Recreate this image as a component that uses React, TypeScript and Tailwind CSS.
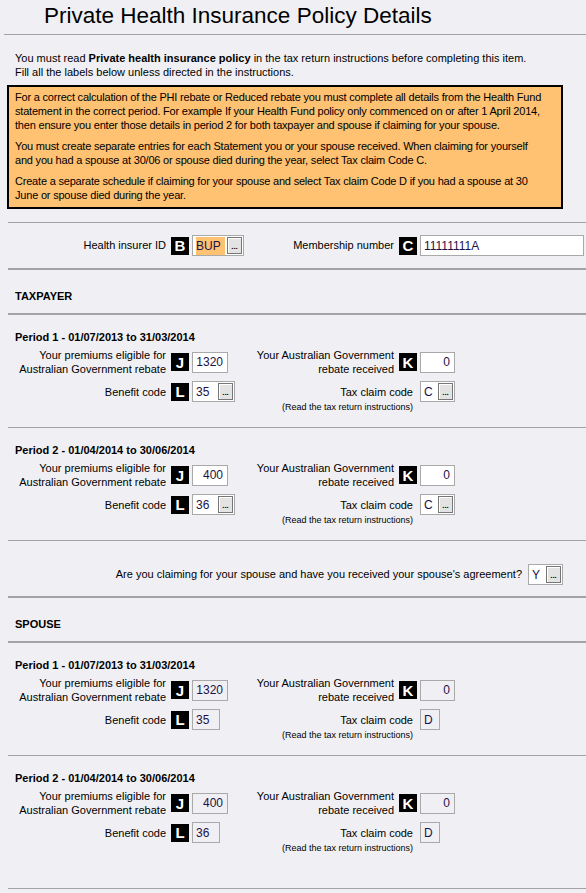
import React from "react";

type FieldProps = {
  value: string;
  w: string;
  right?: boolean;
  btn?: boolean;
  off?: boolean;
  hl?: boolean;
};

function Letter({ ch }: { ch: string }) {
  return (
    <span className="flex h-[18px] w-[18px] shrink-0 items-center justify-center bg-black text-[15px] font-bold leading-none text-white">
      {ch}
    </span>
  );
}

function Field({ value, w, right, btn, off, hl }: FieldProps) {
  return (
    <div
      className={`relative flex h-[21px] shrink-0 items-center border border-[#a9a9a9] text-[12px] text-[#1b1248] ${w} ${
        off ? "bg-transparent" : "bg-white"
      } ${right ? "justify-end pr-[4px]" : "pl-[3px]"}`}
    >
      <span className={hl ? "bg-[#ffc172] pr-[4px]" : ""}>{value}</span>
      {btn && (
        <span className="absolute bottom-[1px] right-[1px] top-[1px] flex w-[15px] items-end justify-center border border-[#767676] bg-[#e3e3e3] pb-[2px] text-[8px] font-bold leading-[8px] text-black shadow-[inset_1px_1px_0_#fff]">
          ...
        </span>
      )}
    </div>
  );
}

function Rule({ thick }: { thick?: boolean }) {
  return <div className={`ml-[8px] ${thick ? "border-t-2" : "border-t"} border-[#a3a3a3]`} />;
}

type PeriodProps = {
  title: string;
  premiums: string;
  rebate: string;
  benefit: string;
  tax: string;
  spouse?: boolean;
  last?: boolean;
};

function Period({ title, premiums, rebate, benefit, tax, spouse, last }: PeriodProps) {
  return (
    <div className={`pl-[15px] pt-[15px] ${last ? "pb-[34px]" : "pb-[14px]"}`}>
      <div className="text-[11px] font-bold leading-[14px]">{title}</div>
      <div className="-ml-[15px] mt-[4px] flex h-[28px] items-center">
        <div className="flex w-[244px] items-center">
          <div className="w-[166px] text-right text-[11px] leading-[14px]">
            Your premiums eligible for
            <br />
            Australian Government rebate
          </div>
          <div className="ml-[5px]">
            <Letter ch="J" />
          </div>
          <div className="ml-[3px]">
            <Field value={premiums} w="w-[36px]" right off={spouse} />
          </div>
        </div>
        <div className="flex items-center">
          <div className="w-[150px] text-right text-[11px] leading-[14px]">
            Your Australian Government
            <br />
            rebate received
          </div>
          <div className="ml-[5px]">
            <Letter ch="K" />
          </div>
          <div className="ml-[3px]">
            <Field value={rebate} w="w-[35px]" right off={spouse} />
          </div>
        </div>
      </div>
      <div className="-ml-[15px] mt-[5px] flex h-[21px] items-center">
        <div className="flex w-[244px] items-center">
          <div className="w-[166px] text-right text-[11px] leading-[14px]">Benefit code</div>
          <div className="ml-[5px]">
            <Letter ch="L" />
          </div>
          <div className="ml-[3px]">
            {spouse ? (
              <Field value={benefit} w="w-[28px]" off />
            ) : (
              <Field value={benefit} w="w-[43px]" btn />
            )}
          </div>
        </div>
        <div className="flex items-center">
          <div className="w-[169px] text-right text-[11px] leading-[14px]">Tax claim code</div>
          <div className="ml-[7px]">
            {spouse ? <Field value={tax} w="w-[20px]" off /> : <Field value={tax} w="w-[35px]" btn />}
          </div>
        </div>
      </div>
      <div className="-ml-[15px] flex">
        <div className="ml-[244px] w-[169px] text-right text-[9px] leading-[11px]">
          (Read the tax return instructions)
        </div>
      </div>
    </div>
  );
}

function Section({ name }: { name: string }) {
  return <div className="pb-[10px] pl-[15px] pt-[19px] text-[11px] font-bold leading-[14px]">{name}</div>;
}

export default function App() {
  return (
    <div className="min-h-[893px] w-[586px] overflow-hidden bg-[#f0f0f4] font-['Liberation_Sans',Arial,sans-serif] text-black">
      {/* Title */}
      <div className="h-[34px] pl-[44px] pt-[3px] text-[22.5px] leading-[26px]">
        Private Health Insurance Policy Details
      </div>
      <div className="ml-[4px] border-t border-[#a3a3a3]" />

      {/* Intro */}
      <div className="pl-[15px] pt-[16px] text-[11px] leading-[14px]">
        You must read <b>Private health insurance policy</b> in the tax return instructions before completing this item.
        <br />
        Fill all the labels below unless directed in the instructions.
      </div>

      <div className="ml-[7px] mt-[6px] w-[556px] whitespace-nowrap border-2 border-black bg-[#ffc172] px-[6px] pb-[5px] pt-[3px] text-[11px] leading-[14px] tracking-[-0.2px]">
        <p>
          For a correct calculation of the PHI rebate or Reduced rebate you must complete all details from the Health Fund
          <br />
          statement in the correct period. For example If your Health Fund policy only commenced on or after 1 April 2014,
          <br />
          then ensure you enter those details in period 2 for both taxpayer and spouse if claiming for your spouse.
        </p>
        <p className="mt-[7px]">
          You must create separate entries for each Statement you or your spouse received. When claiming for yourself
          <br />
          and you had a spouse at 30/06 or spouse died during the year, select Tax claim Code C.
        </p>
        <p className="mt-[7px]">
          Create a separate schedule if claiming for your spouse and select Tax claim Code D if you had a spouse at 30
          <br />
          June or spouse died during the year.
        </p>
      </div>

      <div className="mt-[13px]">
        <Rule />
      </div>

      {/* Health insurer */}
      <div className="flex h-[45px] items-center">
        <div className="flex w-[244px] items-center">
          <div className="w-[166px] text-right text-[11px]">Health insurer ID</div>
          <div className="ml-[5px]">
            <Letter ch="B" />
          </div>
          <div className="ml-[3px]">
            <Field value="BUP" w="w-[52px]" btn hl />
          </div>
        </div>
        <div className="flex items-center">
          <div className="w-[150px] text-right text-[11px]">Membership number</div>
          <div className="ml-[5px]">
            <Letter ch="C" />
          </div>
          <div className="ml-[3px]">
            <Field value="11111111A" w="w-[164px]" />
          </div>
        </div>
      </div>
      <Rule thick />

      <Section name="TAXPAYER" />
      <Rule thick />
      <Period title="Period 1 - 01/07/2013 to 31/03/2014" premiums="1320" rebate="0" benefit="35" tax="C" />
      <Rule />
      <Period title="Period 2 - 01/04/2014 to 30/06/2014" premiums="400" rebate="0" benefit="36" tax="C" />
      <Rule />

      {/* Spouse agreement */}
      <div className="flex items-center justify-end pb-[11px] pr-[23px] pt-[23px]">
        <span className="text-[11px]">Are you claiming for your spouse and have you received your spouse's agreement?</span>
        <div className="ml-[6px]">
          <Field value="Y" w="w-[35px]" btn />
        </div>
      </div>
      <Rule thick />

      <Section name="SPOUSE" />
      <Rule thick />
      <Period title="Period 1 - 01/07/2013 to 31/03/2014" premiums="1320" rebate="0" benefit="35" tax="D" spouse />
      <Rule />
      <Period title="Period 2 - 01/04/2014 to 30/06/2014" premiums="400" rebate="0" benefit="36" tax="D" spouse last />
      <Rule />
    </div>
  );
}
